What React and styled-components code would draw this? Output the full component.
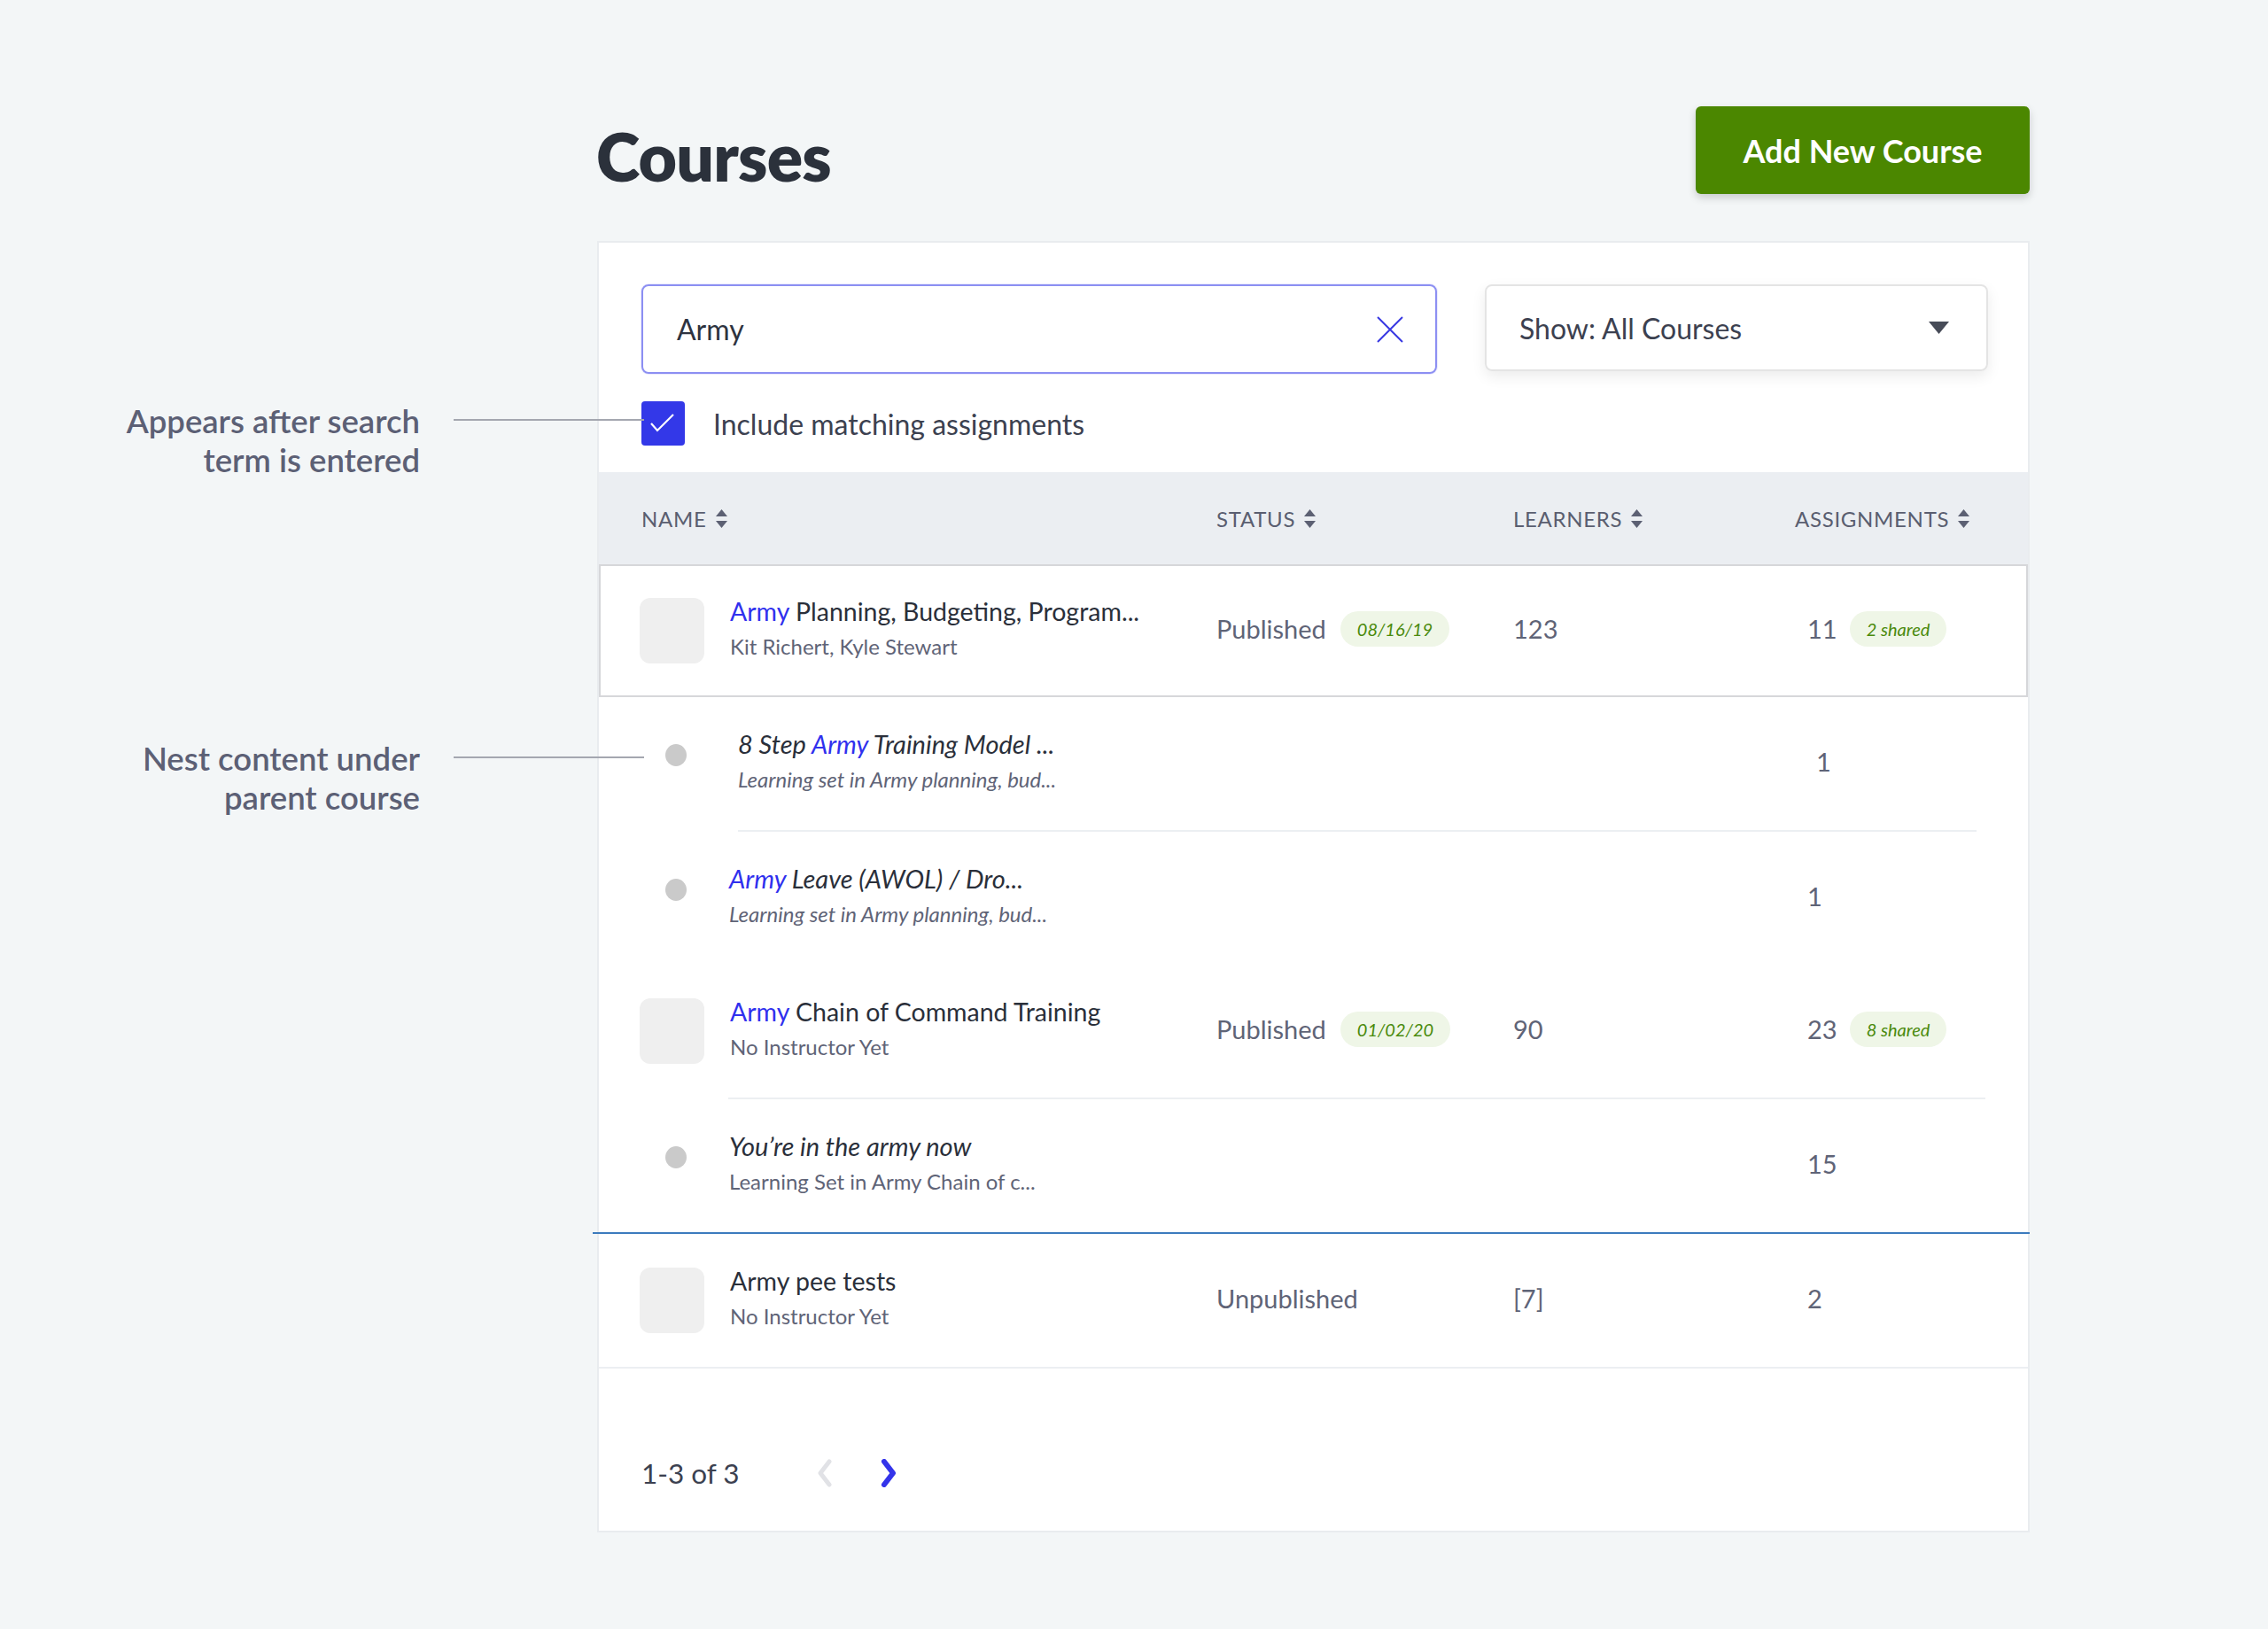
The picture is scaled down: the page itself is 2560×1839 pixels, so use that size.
import React from 'react';
import styled, { createGlobalStyle } from 'styled-components';

const GlobalStyle = createGlobalStyle`
  html, body {
    margin: 0;
    padding: 0;
    background: #f3f6f7;
  }
  body {
    font-family: Lato, "Open Sans", sans-serif;
    color: #2e3340;
    -webkit-font-smoothing: antialiased;
  }
  * { box-sizing: border-box; }
`;

const Page = styled.div`
  min-height: 1839px;
  padding: 120px 0 0 674px;
`;

const Main = styled.div`
  width: 1617px;
`;

const Header = styled.header`
  display: flex;
  justify-content: space-between;
  align-items: flex-start;
  height: 99px;
`;

const Title = styled.h1`
  margin: 19px 0 0 -1px;
  font-size: 75px;
  line-height: 75px;
  font-weight: 800;
  color: #2b313b;
  letter-spacing: -0.8px;
`;

const AddButton = styled.button`
  width: 377px;
  height: 99px;
  border: 0;
  border-radius: 6px;
  background: #4b8700;
  color: #fff;
  font-family: inherit;
  font-size: 36px;
  font-weight: 700;
  box-shadow: 0 4px 10px rgba(0, 0, 0, 0.18);
  cursor: pointer;
`;

const Card = styled.section`
  margin-top: 53px;
  background: #fff;
  border: 2px solid #e9ecef;
`;

const Toolbar = styled.div`
  padding: 47px 45px 30px 48px;
`;

const SearchRow = styled.div`
  display: flex;
  gap: 54px;
  align-items: flex-start;
`;

const SearchBox = styled.div`
  width: 898px;
  height: 101px;
  border: 2px solid #8c8ff2;
  border-radius: 8px;
  box-shadow: 0 0 0 1px rgba(120, 124, 240, 0.15);
  display: flex;
  align-items: center;
  justify-content: space-between;
  padding: 0 35px 0 38px;
  font-size: 32px;
  color: #2e3340;
`;

const Select = styled.div`
  flex: 1;
  height: 98px;
  border: 2px solid #e4e4e4;
  border-radius: 8px;
  box-shadow: 0 6px 16px rgba(0, 0, 0, 0.08);
  display: flex;
  align-items: center;
  justify-content: space-between;
  padding: 0 42px 0 37px;
  font-size: 32px;
  color: #3c4150;
`;

const CheckRow = styled.label`
  position: relative;
  margin-top: 31px;
  display: flex;
  align-items: center;
  height: 50px;
`;

const CheckBox = styled.span`
  width: 49px;
  height: 50px;
  border-radius: 4px;
  background: #3338e8;
  display: flex;
  align-items: center;
  justify-content: center;
`;

const CheckLabel = styled.span`
  margin-left: 32px;
  font-size: 32px;
  color: #3c4150;
`;

const Callout = styled.div`
  position: absolute;
  right: calc(100% - 3px);
  top: ${(p) => p.$top}px;
  display: flex;
  align-items: flex-start;
  gap: 38px;
`;

const CalloutText = styled.div`
  font-size: 36.5px;
  line-height: 44px;
  font-weight: 600;
  color: #5c6075;
  text-align: right;
  white-space: nowrap;
`;

const CalloutLine = styled.div`
  width: 215px;
  height: 2px;
  margin-top: 20px;
  background: #a4a7b0;
`;

const columns = `649px 335px 318px 1fr`;

const TableHead = styled.div`
  display: grid;
  grid-template-columns: ${columns};
  align-items: center;
  height: 104px;
  padding-left: 48px;
  background: #ebeef2;
`;

const HeadCell = styled.div`
  display: flex;
  align-items: center;
  gap: 10px;
  font-size: 24px;
  letter-spacing: 0.7px;
  color: #5a5e70;
`;

const Row = styled.div`
  display: grid;
  grid-template-columns: ${columns};
  height: 150px;
  padding-left: ${(p) => (p.$selected ? 46 : 48)}px;
  padding-bottom: 5px;
  border: ${(p) => (p.$selected ? '2px solid #d6d7da' : '0')};
`;

const Cell = styled.div`
  position: relative;
  display: flex;
  align-items: center;
  padding-left: ${(p) => p.$pad || 0}px;
  font-size: 29px;
  color: #5f6477;
`;

const Thumb = styled.div`
  width: 73px;
  height: 74px;
  margin: 5px 0 0 -2px;
  border-radius: 12px;
  background: #efefef;
  flex-shrink: 0;
`;

const Dot = styled.div`
  width: 24px;
  height: 25px;
  margin: 0 0 14px 27px;
  border-radius: 50%;
  background: #cacaca;
  flex-shrink: 0;
`;

const NameText = styled.div`
  margin-left: ${(p) => p.$gap}px;
  display: flex;
  flex-direction: column;
  font-style: ${(p) => (p.$italic ? 'italic' : 'normal')};
`;

const RowTitle = styled.div`
  font-size: ${(p) => (p.$italic ? 29 : 28.5)}px;
  line-height: 40px;
  color: #2a2f3a;
  white-space: nowrap;
`;

const RowSub = styled.div`
  font-size: 24px;
  line-height: 40px;
  color: #5f6477;
  white-space: nowrap;
  font-style: ${(p) => (p.$upright ? 'normal' : 'inherit')};
`;

const Hit = styled.span`
  color: #3030ee;
`;

const Pill = styled.span`
  margin-left: ${(p) => p.$gap}px;
  height: 40px;
  padding: 0 19px;
  border-radius: 20px;
  background: #eff6e7;
  color: #4a8a0c;
  font-size: 20px;
  font-style: italic;
  display: inline-flex;
  align-items: center;
`;

const Divider = styled.div`
  height: 2px;
  margin: 0 ${(p) => p.$right || 0}px 0 ${(p) => p.$left || 0}px;
  background: ${(p) => p.$color || '#eceff2'};
`;

const Footer = styled.div`
  height: 183px;
  display: flex;
  align-items: flex-end;
  padding: 0 48px 45px;
`;

const Count = styled.span`
  font-size: 31.5px;
  line-height: 40px;
  color: #3c4150;
`;

const Pager = styled.div`
  margin-left: 84px;
  height: 40px;
  display: flex;
  align-items: center;
  gap: 48px;
`;

const SortIcon = () => (
  <svg width="13" height="21" viewBox="0 0 13 21">
    <polygon points="0,8 6.5,0 13,8" fill="#5c6073" />
    <polygon points="0,13 6.5,21 13,13" fill="#5c6073" />
  </svg>
);

const CloseIcon = () => (
  <svg width="32" height="32" viewBox="0 0 32 32">
    <path d="M2 2 L30 30 M30 2 L2 30" stroke="#3838e2" strokeWidth="2" fill="none" />
  </svg>
);

const Caret = () => (
  <svg width="23" height="14" viewBox="0 0 23 14">
    <polygon points="0,0 23,0 11.5,14" fill="#474c58" />
  </svg>
);

const Check = () => (
  <svg width="49" height="50" viewBox="0 0 49 50">
    <polyline points="11,25 18,33 36,15" stroke="#fff" strokeWidth="2.2" fill="none" />
  </svg>
);

const Chevron = ({ dir, color, width }) => (
  <svg width="24" height="32" viewBox="0 0 24 32">
    <polyline
      points={dir === 'left' ? '17,3 7,16 17,29' : '7,3 17,16 7,29'}
      stroke={color}
      strokeWidth={width}
      fill="none"
      strokeLinejoin="round"
      strokeLinecap="round"
    />
  </svg>
);

function CourseRow({ title, sub, status, date, learners, assignments, shared, selected }) {
  return (
    <Row $selected={selected}>
      <Cell>
        <Thumb />
        <NameText $gap={29}>
          <RowTitle>{title}</RowTitle>
          <RowSub>{sub}</RowSub>
        </NameText>
      </Cell>
      <Cell>
        {status}
        {date && <Pill $gap={16}>{date}</Pill>}
      </Cell>
      <Cell>{learners}</Cell>
      <Cell $pad={14}>
        {assignments}
        {shared && <Pill $gap={14}>{shared}</Pill>}
      </Cell>
    </Row>
  );
}

function NestedRow({ title, sub, count, shift = 0, upright, callout }) {
  return (
    <Row>
      <Cell>
        {callout}
        <Dot />
        <NameText $gap={48 + shift} $italic>
          <RowTitle $italic>{title}</RowTitle>
          <RowSub $upright={upright}>{sub}</RowSub>
        </NameText>
      </Cell>
      <Cell />
      <Cell />
      <Cell $pad={14 + shift}>{count}</Cell>
    </Row>
  );
}

export default function App() {
  return (
    <>
      <GlobalStyle />
      <Page>
        <Main>
          <Header>
            <Title>Courses</Title>
            <AddButton>Add New Course</AddButton>
          </Header>

          <Card>
            <Toolbar>
              <SearchRow>
                <SearchBox>
                  <span>Army</span>
                  <CloseIcon />
                </SearchBox>
                <Select>
                  <span>Show: All Courses</span>
                  <Caret />
                </Select>
              </SearchRow>
              <CheckRow>
                <Callout $top={0}>
                  <CalloutText>
                    Appears after search
                    <br />
                    term is entered
                  </CalloutText>
                  <CalloutLine />
                </Callout>
                <CheckBox>
                  <Check />
                </CheckBox>
                <CheckLabel>Include matching assignments</CheckLabel>
              </CheckRow>
            </Toolbar>

            <TableHead>
              <HeadCell>NAME <SortIcon /></HeadCell>
              <HeadCell>STATUS <SortIcon /></HeadCell>
              <HeadCell>LEARNERS <SortIcon /></HeadCell>
              <HeadCell>ASSIGNMENTS <SortIcon /></HeadCell>
            </TableHead>

            <CourseRow
              selected
              title={<><Hit>Army</Hit> Planning, Budgeting, Program...</>}
              sub="Kit Richert, Kyle Stewart"
              status="Published"
              date="08/16/19"
              learners="123"
              assignments="11"
              shared="2 shared"
            />
            <NestedRow
              shift={10}
              title={<>8 Step <Hit>Army</Hit> Training Model ...</>}
              sub="Learning set in Army planning, bud..."
              count="1"
              callout={
                <Callout $top={47}>
                  <CalloutText>
                    Nest content under
                    <br />
                    parent course
                  </CalloutText>
                  <CalloutLine />
                </Callout>
              }
            />
            <Divider $left={157} $right={58} />
            <NestedRow
              title={<><Hit>Army</Hit> Leave (AWOL) / Dro...</>}
              sub="Learning set in Army planning, bud..."
              count="1"
            />
            <CourseRow
              title={<><Hit>Army</Hit> Chain of Command Training</>}
              sub="No Instructor Yet"
              status="Published"
              date="01/02/20"
              learners="90"
              assignments="23"
              shared="8 shared"
            />
            <Divider $left={146} $right={48} />
            <NestedRow
              upright
              title="You’re in the army now"
              sub="Learning Set in Army Chain of c..."
              count="15"
            />
            <Divider $left={-7} $right={-2} $color="#3c7bbd" />
            <CourseRow
              title="Army pee tests"
              sub="No Instructor Yet"
              status="Unpublished"
              learners="[7]"
              assignments="2"
            />
            <Divider />

            <Footer>
              <Count>1-3 of 3</Count>
              <Pager>
                <Chevron dir="left" color="#e1e2e6" width={5} />
                <Chevron dir="right" color="#3434ea" width={6} />
              </Pager>
            </Footer>
          </Card>
        </Main>
      </Page>
    </>
  );
}
